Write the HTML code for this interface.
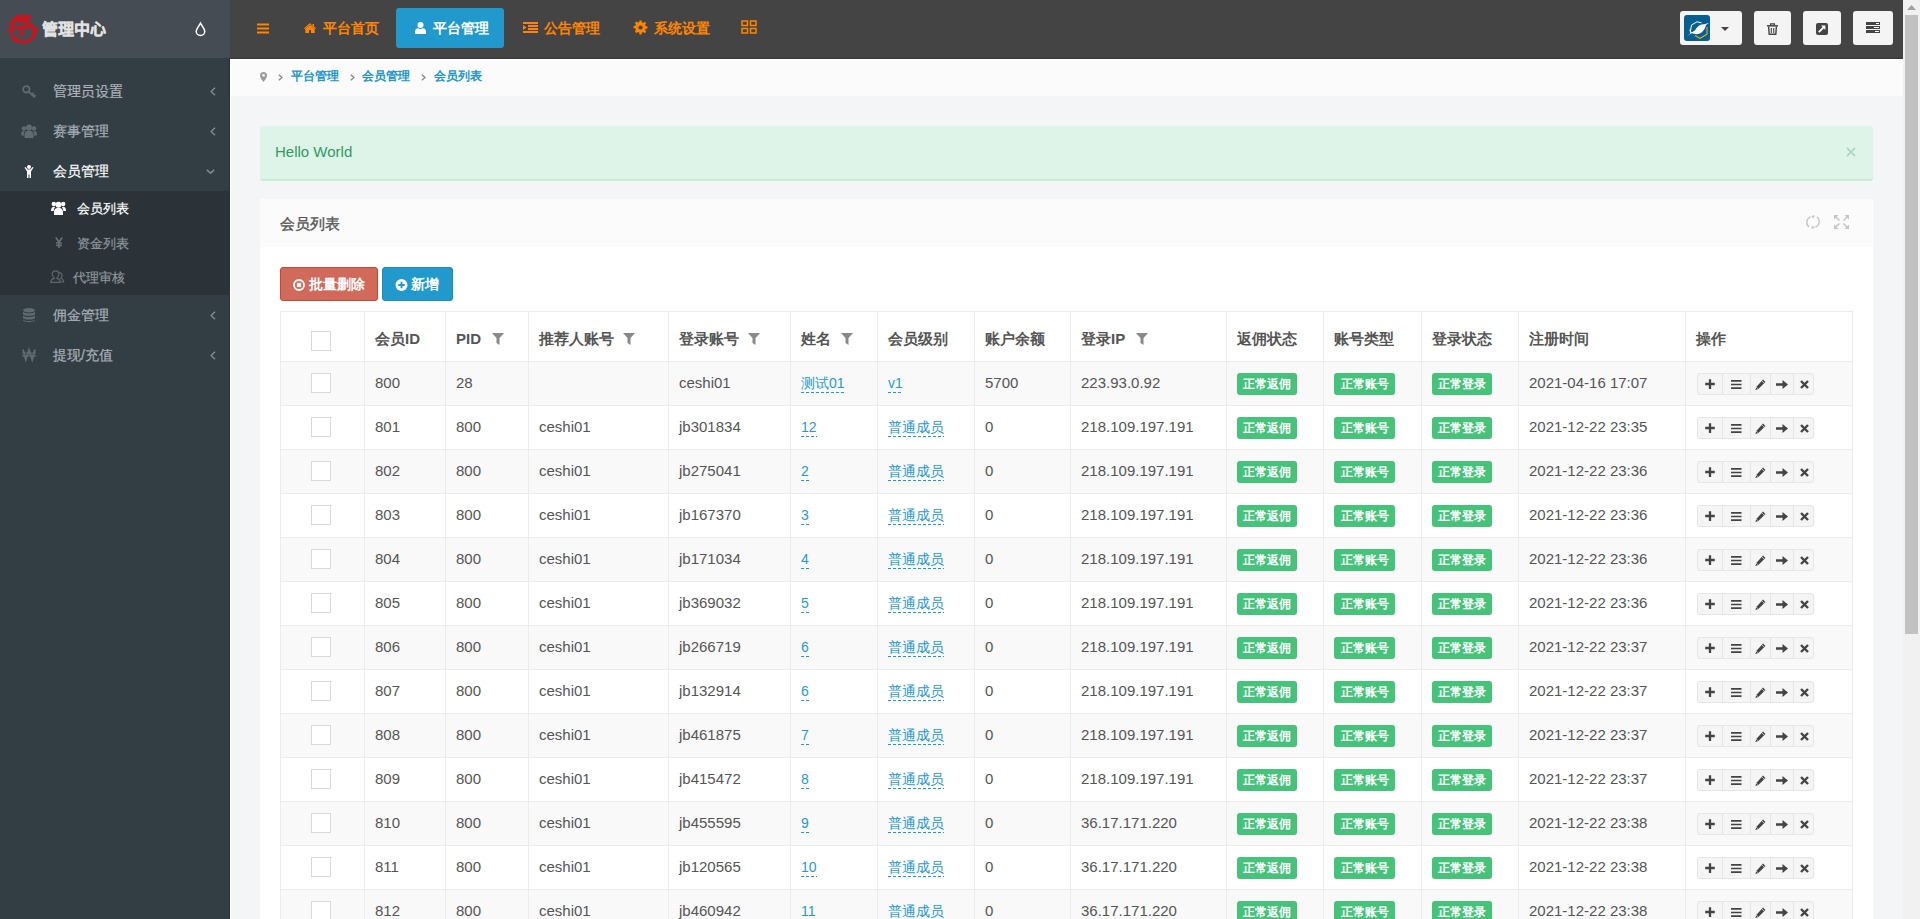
<!DOCTYPE html>
<html><head><meta charset="utf-8"><title>会员列表</title><style>
*{box-sizing:border-box;margin:0;padding:0}
html,body{width:1920px;height:919px;overflow:hidden}
body{font-family:"Liberation Sans",sans-serif;font-size:14px;color:#555;background:#f4f5f7;position:relative}
.a{position:absolute}
svg{position:absolute;display:block;overflow:visible}
#side{position:absolute;left:0;top:0;width:230px;height:919px;background:#333d44}
#logo{position:absolute;left:0;top:0;width:230px;height:58px;background:#464c54}
.mt{position:absolute;font-size:14px;color:#aab1b7;white-space:nowrap;line-height:16px;-webkit-text-stroke:0.2px currentColor}
#sub{position:absolute;left:0;top:191px;width:230px;height:104px;background:#2b3338}
#top{position:absolute;left:230px;top:0;width:1673px;height:59px;background:#444;border-bottom:1px solid #383838}
.nt{position:absolute;top:20px;font-size:14px;font-weight:bold;color:#ff8400;white-space:nowrap;line-height:16px}
#active{position:absolute;left:396px;top:8px;width:108px;height:40px;background:#2299cc;border-radius:3px}
.tb{position:absolute;top:11px;height:34px;background:#f4f4f4;border-radius:3px}
#bc{position:absolute;left:230px;top:59px;width:1673px;height:37px;background:#fbfbfb;border-top:1px solid #fff;border-left:1px solid #fff}
#wl{position:absolute;left:230px;top:59px;width:1px;height:860px;background:#fff}
#sl{position:absolute;left:229px;top:58px;width:1px;height:861px;background:#283137}
.bt{position:absolute;top:69px;font-size:12px;color:#1b95cc;white-space:nowrap;line-height:14px;font-weight:bold}
#alert{position:absolute;left:260px;top:126px;width:1613px;height:55px;background:#dff4e8;border-bottom:2px solid #c8ecd5;border-radius:3px}
#panel{position:absolute;left:260px;top:199px;width:1613px;height:720px;background:#fff}
#ph{position:absolute;left:0;top:0;width:1613px;height:48px;background:#fbfbfb}
.btn{position:absolute;top:267px;height:34px;border-radius:3px}
.btt{position:absolute;top:276px;font-size:14px;font-weight:bold;color:#fff;white-space:nowrap;line-height:16px}
table{position:absolute;left:280px;top:311px;border-collapse:collapse;table-layout:fixed;width:1573px;font-size:15px}
td,th{border:1px solid #ececec;height:44px;padding:0 0 0 10px;text-align:left;white-space:nowrap;overflow:hidden;vertical-align:middle;line-height:18px}
th{height:50px;font-weight:bold;color:#555;padding-top:5px}
tbody tr:nth-child(odd){background:#f9f9f9}
td{color:#555;padding-bottom:2px}
.cb{display:inline-block;width:20px;height:20px;border:1px solid #d9d9d9;background:#fff;margin-left:20px;vertical-align:middle}
a.l{color:#1f9bd4;text-decoration:none;font-size:14px;padding-bottom:2px;background:linear-gradient(90deg,#1f9bd4 3px,transparent 3px) repeat-x 0 100%/5px 1px}
.bd{display:inline-block;width:60px;height:22px;line-height:22px;background:#46c37b;color:#fff;font-size:12px;font-weight:bold;text-align:center;border-radius:3px;vertical-align:middle;position:relative;top:1px}
.ops{display:inline-block;position:relative;width:117px;height:22px;border:1px solid #e6e6e6;border-radius:3px;background:#f5f5f5;vertical-align:middle;margin-left:1px;top:1px}
.ops i{position:absolute;top:0;bottom:0;width:1px;background:#e6e6e6}
.fl{display:inline-block;width:12px;height:12px;margin-left:9px;vertical-align:-1px}
#sb{position:absolute;left:1903px;top:0;width:17px;height:919px;background:#f1f1f1}
#sbt{position:absolute;left:2px;top:15px;width:13px;height:619px;background:#c1c1c1}
</style></head><body>
<div id="side">
<div id="logo">
<svg style="left:5px;top:12px" width="36" height="33" viewBox="0 0 36 33" ><g fill="#c8141e" stroke="#c8141e" stroke-linejoin="round"><path d="M8.5 6L12 3.5 19 3l7 1v2.5l-4 1 3 1-1 1.5-5 .5-5-.5-4.5-1z" stroke-width=".8"/><path d="M9.5 8C6.5 10 6 15 7.5 19" fill="none" stroke-width="4"/><path d="M11 14.5c4 2 9 1.5 13.5-2.5" fill="none" stroke-width="4.2"/><path d="M23 12.5c6 1 7.5 7.5 5 12.5-2.5 4-8 5.5-12 4.5" fill="none" stroke-width="3.3"/><path d="M29 15l4 1.5-2 1.5 2 2-3.5 1z" stroke-width=".8"/><path d="M3 18l4-1 1 4-4-.5z" stroke-width=".8"/><path d="M5 23.5l5 1 5 3.5-1 2.5-5-1.5z" stroke-width="1"/><path d="M14 19.5l5 .5-1 3h-3z" stroke-width=".8"/></g><g fill="#464c54"><path d="M20.5 7.4l6-.6-1.5 1.5z"/><circle cx="17.5" cy="5.6" r=".9"/><circle cx="13" cy="6.5" r=".7"/><path d="M12 12.3l3 .8 3-.9 2 .6-1 .8-7-.2z"/></g></svg>
<div class="a" lang="zh-CN" style="left:42px;top:21px;font-size:16px;line-height:18px;font-weight:bold;color:#e2e2e2;-webkit-text-stroke:0.3px #e2e2e2;font-family:'Liberation Serif',serif">管理中心</div>
<svg style="left:195px;top:22px" width="11" height="14" viewBox="0 0 11 14" ><path d="M5.5 1.2C4 4 1.2 7 1.2 9.2a4.3 4.3 0 0 0 8.6 0C9.8 7 7 4 5.5 1.2z" fill="none" stroke="#fff" stroke-width="1.5"/></svg>
</div>
<svg style="left:22px;top:85px" width="14" height="13" viewBox="0 0 14 13" ><g fill="none" stroke="#5f6a71" stroke-width="1.8"><circle cx="4.3" cy="4.3" r="3.2"/><path d="M6.6 6.6L13 12.5M10 9.6l1.8-1.6M12 11.4l1.5-1.4"/></g></svg>
<div class="mt" style="left:53px;top:83px">管理员设置</div>
<svg style="left:210px;top:87px" width="6" height="9" viewBox="0 0 6 9" ><path d="M5 0.8L1.2 4.5 5 8.2" fill="none" stroke="#7d868c" stroke-width="1.6"/></svg>
<svg style="left:21px;top:124px" width="16" height="14" viewBox="0 0 16 14" ><g fill="#5f6a71"><circle cx="8" cy="3.5" r="3"/><circle cx="3" cy="4.5" r="2.2"/><circle cx="13" cy="4.5" r="2.2"/><path d="M3.5 14v-3c0-3 2-4.5 4.5-4.5s4.5 1.5 4.5 4.5v3z"/><path d="M0 11c0-2.5 1-4 3-4l1 .5c-1 1-1.2 2-1.2 3.5v1z"/><path d="M16 11c0-2.5-1-4-3-4l-1 .5c1 1 1.2 2 1.2 3.5v1z"/></g></svg>
<div class="mt" style="left:53px;top:123px">赛事管理</div>
<svg style="left:210px;top:127px" width="6" height="9" viewBox="0 0 6 9" ><path d="M5 0.8L1.2 4.5 5 8.2" fill="none" stroke="#7d868c" stroke-width="1.6"/></svg>
<svg style="left:24px;top:165px" width="10" height="13" viewBox="0 0 10 13" ><g fill="#fff"><circle cx="5" cy="2" r="2"/><path d="M0.5 2.5l1 -0.5 2 2.5h3l2-2.5 1 .5-2.5 4v6.5h-1.5v-3.5h-1v3.5h-1.5v-6.5z"/></g></svg>
<div class="mt" style="left:53px;top:163px;color:#fff">会员管理</div>
<svg style="left:206px;top:169px" width="9" height="5" viewBox="0 0 9 5" ><path d="M0.8 0.8L4.5 4.2 8.2 0.8" fill="none" stroke="#7d868c" stroke-width="1.6"/></svg>
<div id="sub">
<svg style="left:51px;top:10px" width="15" height="14" viewBox="0 0 15 14" ><g fill="#fff"><circle cx="7.5" cy="3.8" r="3"/><circle cx="2.8" cy="3" r="2.2"/><circle cx="12.2" cy="3" r="2.2"/><path d="M3 14v-3.5c0-2.5 2-3.8 4.5-3.8s4.5 1.3 4.5 3.8v3.5z"/><path d="M0 10c0-3 1-4.3 3-4.3l1.2.6c-1 .8-1.5 2-1.5 3.7z"/><path d="M15 10c0-3-1-4.3-3-4.3l-1.2.6c1 .8 1.5 2 1.5 3.7z"/></g></svg>
<div class="mt" style="left:77px;top:10px;font-size:13px;color:#fff">会员列表</div>
<svg style="left:55px;top:46px" width="8" height="11" viewBox="0 0 8 11" ><g fill="none" stroke="#666e73" stroke-width="1.7"><path d="M0.8 0.5L4 5 7.2 0.5M4 5v6M1 6h6M1 8.3h6"/></g></svg>
<div class="mt" style="left:77px;top:45px;font-size:13px;color:#8f979c">资金列表</div>
<svg style="left:50px;top:79px" width="14" height="13" viewBox="0 0 14 13" ><g fill="none" stroke="#5f676c" stroke-width="1.2"><path d="M5 8.2C3 8.5 0.8 9.5 0.8 12.3h9.5c0-2.8-2.2-3.8-4.2-4.1"/><path d="M4 7.5c-1.3-1-1.8-2.5-1.8-4A3.5 3.5 0 0 1 9 3.5c0 1.5-.5 3-1.8 4"/><path d="M9 2.5a3 3 0 0 1 3 3c0 1-.3 2-1.2 3 1.8.3 2.8 1.3 2.8 3.3h-2.3"/></g></svg>
<div class="mt" style="left:73px;top:79px;font-size:13px;color:#8f979c">代理审核</div>
</div>
<svg style="left:23px;top:308px" width="12" height="14" viewBox="0 0 12 14" ><g fill="#5f6a71"><ellipse cx="6" cy="2.2" rx="6" ry="2.2"/><path d="M0 3.8c1 1 3 1.5 6 1.5s5-.5 6-1.5v2.4c-1 1-3 1.5-6 1.5s-5-.5-6-1.5z"/><path d="M0 7.6c1 1 3 1.5 6 1.5s5-.5 6-1.5v2.4c-1 1-3 1.5-6 1.5s-5-.5-6-1.5z"/><path d="M0 11.4c1 1 3 1.5 6 1.5s5-.5 6-1.5v.6c0 1.2-2.7 2-6 2s-6-.8-6-2z"/></g></svg>
<div class="mt" style="left:53px;top:307px">佣金管理</div>
<svg style="left:210px;top:311px" width="6" height="9" viewBox="0 0 6 9" ><path d="M5 0.8L1.2 4.5 5 8.2" fill="none" stroke="#7d868c" stroke-width="1.6"/></svg>
<svg style="left:22px;top:349px" width="14" height="11" viewBox="0 0 14 11" ><g fill="none" stroke="#5f6a71"><path d="M1 0.5l2.8 10 3.2-9.5 3.2 9.5 2.8-10" stroke-width="1.9"/><path d="M0 4h14M0 6.8h14" stroke-width="1.2"/></g></svg>
<div class="mt" style="left:53px;top:347px">提现/充值</div>
<svg style="left:210px;top:351px" width="6" height="9" viewBox="0 0 6 9" ><path d="M5 0.8L1.2 4.5 5 8.2" fill="none" stroke="#7d868c" stroke-width="1.6"/></svg>
</div>
<div id="top"></div>
<svg style="left:257px;top:23px" width="12" height="11" viewBox="0 0 12 11" ><g fill="#ff8400"><rect y="0.5" width="12" height="2"/><rect y="4.5" width="12" height="2"/><rect y="8.5" width="12" height="2"/></g></svg>
<svg style="left:304px;top:23px" width="12" height="10" viewBox="0 0 12 10" ><g fill="#ff8400"><path d="M6 0L0 5.3l.8.8L6 1.6l5.2 4.5.8-.8-2-1.8V1h-1.5v2z"/><path d="M1.3 5.8L6 2l4.7 3.8V10H7V7H5v3H1.3z"/></g></svg>
<div class="nt" style="left:323px">平台首页</div>
<div id="active"></div>
<svg style="left:415px;top:22px" width="11" height="12" viewBox="0 0 11 12" ><g fill="#fff"><circle cx="5.5" cy="3" r="3"/><path d="M0 12v-2.2c0-2.5 1.5-3.6 3-3.6 1 .6 1.6.8 2.5.8s1.5-.2 2.5-.8c1.5 0 3 1.1 3 3.6V12z"/></g></svg>
<div class="nt" style="left:433px;color:#fff">平台管理</div>
<svg style="left:523px;top:22px" width="15" height="11" viewBox="0 0 15 11" ><g fill="#ff8400"><rect x="0" y="0" width="15" height="2"/><rect x="5" y="3" width="10" height="2"/><rect x="5" y="6" width="10" height="2"/><rect x="0" y="9" width="15" height="2"/><path d="M0 3l3.5 2.5L0 8z"/></g></svg>
<div class="nt" style="left:544px">公告管理</div>
<svg style="left:634px;top:21px" width="13" height="13" viewBox="0 0 13 13" ><g fill="#ff8400"><path d="M5.4 0h2.2l.4 2 1.3.6 1.7-1.2 1.6 1.6-1.2 1.7.6 1.3 2 .4v2.2l-2 .4-.6 1.3 1.2 1.7-1.6 1.6-1.7-1.2-1.3.6-.4 2H5.4l-.4-2-1.3-.6-1.7 1.2L.4 11.6l1.2-1.7L1 8.6l-2-.4V6l2-.4.6-1.3L.4 2.6 2 1l1.7 1.2L5 1.6z" transform="translate(0.5 -0.5) scale(.93)"/></g><circle cx="6.5" cy="6.5" r="2.1" fill="#444"/></svg>
<div class="nt" style="left:654px">系统设置</div>
<svg style="left:741px;top:20px" width="16" height="14" viewBox="0 0 16 14" ><g fill="none" stroke="#ff8400" stroke-width="1.5"><rect x="1" y="1" width="5.5" height="4.5"/><rect x="9.5" y="1" width="5.5" height="4.5"/><rect x="1" y="8.5" width="5.5" height="4.5"/><rect x="9.5" y="8.5" width="5.5" height="4.5"/></g></svg>
<div class="tb" style="left:1680px;width:62px"></div>
<div class="a" style="left:1684px;top:15px;width:26px;height:26px;background:#05608f;border-radius:3px"></div>
<svg style="left:1684px;top:15px" width="26" height="26" viewBox="0 0 26 26" ><path d="M6.5 15.5L7.5 10 13 6.8l4.5 1" fill="none" stroke="#fff" stroke-width="1"/><path d="M11 20.5l5 2.8 7-4V12" fill="none" stroke="#e5a823" stroke-width="1.1"/><path d="M3 21.5l4.5-3.5c3 1.5 7 1.8 10-.5 2.5-2 4-5 4.5-7.5L25 7.8l-4.5 1.5c-3-.5-6 1-8 4-1.5 2.2-3 3.5-5 4z" fill="#fff"/><path d="M5.8 14.5l1.5 4" stroke="#fff" stroke-width="1.2"/><path d="M12 14.5l2.5-1.5" stroke="#fff" stroke-width="1.2"/></svg>
<svg style="left:1721px;top:27px" width="8" height="4" viewBox="0 0 8 4" ><path d="M0 0h8L4 4z" fill="#444"/></svg>
<div class="tb" style="left:1754px;width:37px"></div>
<svg style="left:1767px;top:23px" width="11" height="12" viewBox="0 0 11 12" ><g fill="none" stroke="#444"><path d="M3.6 2.3V.8h3.8v1.5" stroke-width="1.3"/><path d="M0 2.8h11" stroke-width="1.5"/><path d="M1.6 3.5l.6 7.8h6.6l.6-7.8" stroke-width="1.4"/><path d="M4.3 5v5M6.7 5v5" stroke-width="1.1"/></g></svg>
<div class="tb" style="left:1803px;width:38px"></div>
<svg style="left:1816px;top:23px" width="12" height="12" viewBox="0 0 12 12" ><rect x="0" y="0" width="12" height="12" rx="2" fill="#444"/><path d="M2.8 9.2l4.8-4.8" stroke="#fff" stroke-width="1.9"/><path d="M5 2.6h4.4V7z" fill="#fff"/></svg>
<div class="tb" style="left:1853px;width:40px"></div>
<svg style="left:1866px;top:22px" width="14" height="11" viewBox="0 0 14 11" ><g fill="#444"><rect y="0" width="14" height="3"/><rect y="4" width="14" height="3"/><rect y="8" width="14" height="3"/></g><g fill="#fff"><rect x="10" y="1" width="3" height="1"/><rect x="8" y="5" width="5" height="1"/><rect x="9" y="9" width="4" height="1"/></g></svg>
<div id="bc"></div><div id="wl"></div><div id="sl"></div>
<svg style="left:260px;top:72px" width="7" height="10" viewBox="0 0 7 10" ><path d="M3.5 0A3.5 3.5 0 0 0 0 3.5C0 6 3.5 10 3.5 10S7 6 7 3.5A3.5 3.5 0 0 0 3.5 0zm0 2a1.4 1.4 0 1 1 0 2.8 1.4 1.4 0 0 1 0-2.8z" fill="#999"/></svg>
<svg style="left:278px;top:74px" width="5" height="7" viewBox="0 0 5 7" ><path d="M.8.8L4 3.5.8 6.2" fill="none" stroke="#888" stroke-width="1.3"/></svg>
<div class="bt" style="left:291px">平台管理</div>
<svg style="left:350px;top:74px" width="5" height="7" viewBox="0 0 5 7" ><path d="M.8.8L4 3.5.8 6.2" fill="none" stroke="#888" stroke-width="1.3"/></svg>
<div class="bt" style="left:362px">会员管理</div>
<svg style="left:421px;top:74px" width="5" height="7" viewBox="0 0 5 7" ><path d="M.8.8L4 3.5.8 6.2" fill="none" stroke="#888" stroke-width="1.3"/></svg>
<div class="bt" style="left:434px">会员列表</div>
<div id="alert"></div>
<div class="a" style="left:275px;top:143px;font-size:15px;line-height:17px;color:#2f9a68">Hello World</div>
<svg style="left:1846px;top:147px" width="10" height="10" viewBox="0 0 10 10" ><path d="M1 1l8 8M9 1L1 9" stroke="#a9dcbf" stroke-width="1.8"/></svg>
<div id="panel"><div id="ph"></div></div>
<div class="a" style="left:280px;top:215px;font-size:15px;line-height:17px;color:#555;-webkit-text-stroke:0.35px #555">会员列表</div>
<svg style="left:1806px;top:215px" width="14" height="14" viewBox="0 0 14 14" ><g fill="none" stroke="#c4c4c4" stroke-width="1.3"><path d="M4.5 1.8A6 6 0 0 0 3 12"/><path d="M9.5 12.2A6 6 0 0 0 11 2"/></g><g fill="#c4c4c4"><path d="M8.5 0l-3.5 1.2 3 2.2z"/><path d="M5.5 14l3.5-1.2-3-2.2z"/></g></svg>
<svg style="left:1834px;top:215px" width="15" height="14" viewBox="0 0 15 14" ><g fill="none" stroke="#c4c4c4" stroke-width="1.4"><path d="M1 1l4.5 4.5M14 1L9.5 5.5M1 13l4.5-4.5M14 13L9.5 8.5"/></g><g fill="#c4c4c4"><path d="M0 0h4.5L0 4.5z"/><path d="M15 0h-4.5L15 4.5z"/><path d="M0 14h4.5L0 9.5z"/><path d="M15 14h-4.5L15 9.5z"/></g></svg>
<div class="btn" style="left:280px;width:98px;background:#d26a5c;border:1px solid #c54736"></div>
<svg style="left:293px;top:279px" width="12" height="12" viewBox="0 0 12 12" ><circle cx="6" cy="6" r="5" fill="none" stroke="#fff" stroke-width="1.8"/><path d="M4.2 4.2l3.6 3.6M7.8 4.2L4.2 7.8" stroke="#fff" stroke-width="2"/></svg>
<div class="btt" style="left:309px">批量删除</div>
<div class="btn" style="left:382px;width:71px;background:#2299cc;border:1px solid #1d8bbb"></div>
<svg style="left:395px;top:279px" width="13" height="12" viewBox="0 0 13 12" ><circle cx="6.5" cy="6" r="6" fill="#fff"/><path d="M6.5 2.8v6.4M3.3 6h6.4" stroke="#2299cc" stroke-width="1.9"/></svg>
<div class="btt" style="left:411px">新增</div>
<table><colgroup><col style="width:84px"><col style="width:81px"><col style="width:83px"><col style="width:140px"><col style="width:122px"><col style="width:87px"><col style="width:97px"><col style="width:96px"><col style="width:156px"><col style="width:97px"><col style="width:98px"><col style="width:97px"><col style="width:167px"><col style="width:167px"></colgroup>
<thead><tr><th><span class="cb" style="position:relative;top:2px"></span></th><th>会员ID</th><th>PID<svg class="fl" style="position:static;display:inline-block;margin-left:11px" width="12" height="12" viewBox="0 0 12 12"><path d="M0 0h12L7.5 5v7L4.5 10V5z" fill="#888"/></svg></th><th>推荐人账号<svg class="fl" style="position:static;display:inline-block" width="12" height="12" viewBox="0 0 12 12"><path d="M0 0h12L7.5 5v7L4.5 10V5z" fill="#888"/></svg></th><th>登录账号<svg class="fl" style="position:static;display:inline-block" width="12" height="12" viewBox="0 0 12 12"><path d="M0 0h12L7.5 5v7L4.5 10V5z" fill="#888"/></svg></th><th>姓名<svg class="fl" style="position:static;display:inline-block;margin-left:10px" width="12" height="12" viewBox="0 0 12 12"><path d="M0 0h12L7.5 5v7L4.5 10V5z" fill="#888"/></svg></th><th>会员级别</th><th>账户余额</th><th>登录IP<svg class="fl" style="position:static;display:inline-block;margin-left:11px" width="12" height="12" viewBox="0 0 12 12"><path d="M0 0h12L7.5 5v7L4.5 10V5z" fill="#888"/></svg></th><th>返佣状态</th><th>账号类型</th><th>登录状态</th><th>注册时间</th><th>操作</th></tr></thead><tbody>
<tr><td><span class="cb"></span></td><td>800</td><td>28</td><td></td><td>ceshi01</td><td><a class="l">测试01</a></td><td><a class="l">v1</a></td><td>5700</td><td>223.93.0.92</td><td><span class="bd">正常返佣</span></td><td><span class="bd" style="width:61px">正常账号</span></td><td><span class="bd">正常登录</span></td><td>2021-04-16 17:07</td><td><span class="ops"><i style="left:24px"></i><i style="left:52px"></i><i style="left:72px"></i><i style="left:95px"></i><svg style="left:7px;top:5px" width="10" height="10" viewBox="0 0 10 10"><path d="M5 0.3v9.6M0.2 5h9.6" stroke="#444" stroke-width="2.3"/></svg><svg style="left:33px;top:6px" width="11" height="9" viewBox="0 0 11 9"><path d="M0 0.9h10.5M0 4.5h10.5M0 8.1h10.5" stroke="#444" stroke-width="1.6"/></svg><svg style="left:57px;top:5px" width="11" height="11" viewBox="0 0 11 11"><path d="M8 0.6l2.4 2.4-7 7-3 .9.9-3z" fill="#444"/><path d="M1.4 8.2l1.4 1.4" stroke="#f5f5f5" stroke-width="0.9"/><path d="M6.8 1.8l2.4 2.4" stroke="#f5f5f5" stroke-width="0.7"/></svg><svg style="left:78px;top:6px" width="12" height="10" viewBox="0 0 12 10"><path d="M0 3.3h6.5V0L12 4.5 6.5 9V5.7H0z" fill="#444"/></svg><svg style="left:102px;top:6px" width="9" height="9" viewBox="0 0 9 9"><path d="M1 1l7 7M8 1L1 8" stroke="#444" stroke-width="2.4"/></svg></span></td></tr>
<tr><td><span class="cb"></span></td><td>801</td><td>800</td><td>ceshi01</td><td>jb301834</td><td><a class="l">12</a></td><td><a class="l">普通成员</a></td><td>0</td><td>218.109.197.191</td><td><span class="bd">正常返佣</span></td><td><span class="bd" style="width:61px">正常账号</span></td><td><span class="bd">正常登录</span></td><td>2021-12-22 23:35</td><td><span class="ops"><i style="left:24px"></i><i style="left:52px"></i><i style="left:72px"></i><i style="left:95px"></i><svg style="left:7px;top:5px" width="10" height="10" viewBox="0 0 10 10"><path d="M5 0.3v9.6M0.2 5h9.6" stroke="#444" stroke-width="2.3"/></svg><svg style="left:33px;top:6px" width="11" height="9" viewBox="0 0 11 9"><path d="M0 0.9h10.5M0 4.5h10.5M0 8.1h10.5" stroke="#444" stroke-width="1.6"/></svg><svg style="left:57px;top:5px" width="11" height="11" viewBox="0 0 11 11"><path d="M8 0.6l2.4 2.4-7 7-3 .9.9-3z" fill="#444"/><path d="M1.4 8.2l1.4 1.4" stroke="#f5f5f5" stroke-width="0.9"/><path d="M6.8 1.8l2.4 2.4" stroke="#f5f5f5" stroke-width="0.7"/></svg><svg style="left:78px;top:6px" width="12" height="10" viewBox="0 0 12 10"><path d="M0 3.3h6.5V0L12 4.5 6.5 9V5.7H0z" fill="#444"/></svg><svg style="left:102px;top:6px" width="9" height="9" viewBox="0 0 9 9"><path d="M1 1l7 7M8 1L1 8" stroke="#444" stroke-width="2.4"/></svg></span></td></tr>
<tr><td><span class="cb"></span></td><td>802</td><td>800</td><td>ceshi01</td><td>jb275041</td><td><a class="l">2</a></td><td><a class="l">普通成员</a></td><td>0</td><td>218.109.197.191</td><td><span class="bd">正常返佣</span></td><td><span class="bd" style="width:61px">正常账号</span></td><td><span class="bd">正常登录</span></td><td>2021-12-22 23:36</td><td><span class="ops"><i style="left:24px"></i><i style="left:52px"></i><i style="left:72px"></i><i style="left:95px"></i><svg style="left:7px;top:5px" width="10" height="10" viewBox="0 0 10 10"><path d="M5 0.3v9.6M0.2 5h9.6" stroke="#444" stroke-width="2.3"/></svg><svg style="left:33px;top:6px" width="11" height="9" viewBox="0 0 11 9"><path d="M0 0.9h10.5M0 4.5h10.5M0 8.1h10.5" stroke="#444" stroke-width="1.6"/></svg><svg style="left:57px;top:5px" width="11" height="11" viewBox="0 0 11 11"><path d="M8 0.6l2.4 2.4-7 7-3 .9.9-3z" fill="#444"/><path d="M1.4 8.2l1.4 1.4" stroke="#f5f5f5" stroke-width="0.9"/><path d="M6.8 1.8l2.4 2.4" stroke="#f5f5f5" stroke-width="0.7"/></svg><svg style="left:78px;top:6px" width="12" height="10" viewBox="0 0 12 10"><path d="M0 3.3h6.5V0L12 4.5 6.5 9V5.7H0z" fill="#444"/></svg><svg style="left:102px;top:6px" width="9" height="9" viewBox="0 0 9 9"><path d="M1 1l7 7M8 1L1 8" stroke="#444" stroke-width="2.4"/></svg></span></td></tr>
<tr><td><span class="cb"></span></td><td>803</td><td>800</td><td>ceshi01</td><td>jb167370</td><td><a class="l">3</a></td><td><a class="l">普通成员</a></td><td>0</td><td>218.109.197.191</td><td><span class="bd">正常返佣</span></td><td><span class="bd" style="width:61px">正常账号</span></td><td><span class="bd">正常登录</span></td><td>2021-12-22 23:36</td><td><span class="ops"><i style="left:24px"></i><i style="left:52px"></i><i style="left:72px"></i><i style="left:95px"></i><svg style="left:7px;top:5px" width="10" height="10" viewBox="0 0 10 10"><path d="M5 0.3v9.6M0.2 5h9.6" stroke="#444" stroke-width="2.3"/></svg><svg style="left:33px;top:6px" width="11" height="9" viewBox="0 0 11 9"><path d="M0 0.9h10.5M0 4.5h10.5M0 8.1h10.5" stroke="#444" stroke-width="1.6"/></svg><svg style="left:57px;top:5px" width="11" height="11" viewBox="0 0 11 11"><path d="M8 0.6l2.4 2.4-7 7-3 .9.9-3z" fill="#444"/><path d="M1.4 8.2l1.4 1.4" stroke="#f5f5f5" stroke-width="0.9"/><path d="M6.8 1.8l2.4 2.4" stroke="#f5f5f5" stroke-width="0.7"/></svg><svg style="left:78px;top:6px" width="12" height="10" viewBox="0 0 12 10"><path d="M0 3.3h6.5V0L12 4.5 6.5 9V5.7H0z" fill="#444"/></svg><svg style="left:102px;top:6px" width="9" height="9" viewBox="0 0 9 9"><path d="M1 1l7 7M8 1L1 8" stroke="#444" stroke-width="2.4"/></svg></span></td></tr>
<tr><td><span class="cb"></span></td><td>804</td><td>800</td><td>ceshi01</td><td>jb171034</td><td><a class="l">4</a></td><td><a class="l">普通成员</a></td><td>0</td><td>218.109.197.191</td><td><span class="bd">正常返佣</span></td><td><span class="bd" style="width:61px">正常账号</span></td><td><span class="bd">正常登录</span></td><td>2021-12-22 23:36</td><td><span class="ops"><i style="left:24px"></i><i style="left:52px"></i><i style="left:72px"></i><i style="left:95px"></i><svg style="left:7px;top:5px" width="10" height="10" viewBox="0 0 10 10"><path d="M5 0.3v9.6M0.2 5h9.6" stroke="#444" stroke-width="2.3"/></svg><svg style="left:33px;top:6px" width="11" height="9" viewBox="0 0 11 9"><path d="M0 0.9h10.5M0 4.5h10.5M0 8.1h10.5" stroke="#444" stroke-width="1.6"/></svg><svg style="left:57px;top:5px" width="11" height="11" viewBox="0 0 11 11"><path d="M8 0.6l2.4 2.4-7 7-3 .9.9-3z" fill="#444"/><path d="M1.4 8.2l1.4 1.4" stroke="#f5f5f5" stroke-width="0.9"/><path d="M6.8 1.8l2.4 2.4" stroke="#f5f5f5" stroke-width="0.7"/></svg><svg style="left:78px;top:6px" width="12" height="10" viewBox="0 0 12 10"><path d="M0 3.3h6.5V0L12 4.5 6.5 9V5.7H0z" fill="#444"/></svg><svg style="left:102px;top:6px" width="9" height="9" viewBox="0 0 9 9"><path d="M1 1l7 7M8 1L1 8" stroke="#444" stroke-width="2.4"/></svg></span></td></tr>
<tr><td><span class="cb"></span></td><td>805</td><td>800</td><td>ceshi01</td><td>jb369032</td><td><a class="l">5</a></td><td><a class="l">普通成员</a></td><td>0</td><td>218.109.197.191</td><td><span class="bd">正常返佣</span></td><td><span class="bd" style="width:61px">正常账号</span></td><td><span class="bd">正常登录</span></td><td>2021-12-22 23:36</td><td><span class="ops"><i style="left:24px"></i><i style="left:52px"></i><i style="left:72px"></i><i style="left:95px"></i><svg style="left:7px;top:5px" width="10" height="10" viewBox="0 0 10 10"><path d="M5 0.3v9.6M0.2 5h9.6" stroke="#444" stroke-width="2.3"/></svg><svg style="left:33px;top:6px" width="11" height="9" viewBox="0 0 11 9"><path d="M0 0.9h10.5M0 4.5h10.5M0 8.1h10.5" stroke="#444" stroke-width="1.6"/></svg><svg style="left:57px;top:5px" width="11" height="11" viewBox="0 0 11 11"><path d="M8 0.6l2.4 2.4-7 7-3 .9.9-3z" fill="#444"/><path d="M1.4 8.2l1.4 1.4" stroke="#f5f5f5" stroke-width="0.9"/><path d="M6.8 1.8l2.4 2.4" stroke="#f5f5f5" stroke-width="0.7"/></svg><svg style="left:78px;top:6px" width="12" height="10" viewBox="0 0 12 10"><path d="M0 3.3h6.5V0L12 4.5 6.5 9V5.7H0z" fill="#444"/></svg><svg style="left:102px;top:6px" width="9" height="9" viewBox="0 0 9 9"><path d="M1 1l7 7M8 1L1 8" stroke="#444" stroke-width="2.4"/></svg></span></td></tr>
<tr><td><span class="cb"></span></td><td>806</td><td>800</td><td>ceshi01</td><td>jb266719</td><td><a class="l">6</a></td><td><a class="l">普通成员</a></td><td>0</td><td>218.109.197.191</td><td><span class="bd">正常返佣</span></td><td><span class="bd" style="width:61px">正常账号</span></td><td><span class="bd">正常登录</span></td><td>2021-12-22 23:37</td><td><span class="ops"><i style="left:24px"></i><i style="left:52px"></i><i style="left:72px"></i><i style="left:95px"></i><svg style="left:7px;top:5px" width="10" height="10" viewBox="0 0 10 10"><path d="M5 0.3v9.6M0.2 5h9.6" stroke="#444" stroke-width="2.3"/></svg><svg style="left:33px;top:6px" width="11" height="9" viewBox="0 0 11 9"><path d="M0 0.9h10.5M0 4.5h10.5M0 8.1h10.5" stroke="#444" stroke-width="1.6"/></svg><svg style="left:57px;top:5px" width="11" height="11" viewBox="0 0 11 11"><path d="M8 0.6l2.4 2.4-7 7-3 .9.9-3z" fill="#444"/><path d="M1.4 8.2l1.4 1.4" stroke="#f5f5f5" stroke-width="0.9"/><path d="M6.8 1.8l2.4 2.4" stroke="#f5f5f5" stroke-width="0.7"/></svg><svg style="left:78px;top:6px" width="12" height="10" viewBox="0 0 12 10"><path d="M0 3.3h6.5V0L12 4.5 6.5 9V5.7H0z" fill="#444"/></svg><svg style="left:102px;top:6px" width="9" height="9" viewBox="0 0 9 9"><path d="M1 1l7 7M8 1L1 8" stroke="#444" stroke-width="2.4"/></svg></span></td></tr>
<tr><td><span class="cb"></span></td><td>807</td><td>800</td><td>ceshi01</td><td>jb132914</td><td><a class="l">6</a></td><td><a class="l">普通成员</a></td><td>0</td><td>218.109.197.191</td><td><span class="bd">正常返佣</span></td><td><span class="bd" style="width:61px">正常账号</span></td><td><span class="bd">正常登录</span></td><td>2021-12-22 23:37</td><td><span class="ops"><i style="left:24px"></i><i style="left:52px"></i><i style="left:72px"></i><i style="left:95px"></i><svg style="left:7px;top:5px" width="10" height="10" viewBox="0 0 10 10"><path d="M5 0.3v9.6M0.2 5h9.6" stroke="#444" stroke-width="2.3"/></svg><svg style="left:33px;top:6px" width="11" height="9" viewBox="0 0 11 9"><path d="M0 0.9h10.5M0 4.5h10.5M0 8.1h10.5" stroke="#444" stroke-width="1.6"/></svg><svg style="left:57px;top:5px" width="11" height="11" viewBox="0 0 11 11"><path d="M8 0.6l2.4 2.4-7 7-3 .9.9-3z" fill="#444"/><path d="M1.4 8.2l1.4 1.4" stroke="#f5f5f5" stroke-width="0.9"/><path d="M6.8 1.8l2.4 2.4" stroke="#f5f5f5" stroke-width="0.7"/></svg><svg style="left:78px;top:6px" width="12" height="10" viewBox="0 0 12 10"><path d="M0 3.3h6.5V0L12 4.5 6.5 9V5.7H0z" fill="#444"/></svg><svg style="left:102px;top:6px" width="9" height="9" viewBox="0 0 9 9"><path d="M1 1l7 7M8 1L1 8" stroke="#444" stroke-width="2.4"/></svg></span></td></tr>
<tr><td><span class="cb"></span></td><td>808</td><td>800</td><td>ceshi01</td><td>jb461875</td><td><a class="l">7</a></td><td><a class="l">普通成员</a></td><td>0</td><td>218.109.197.191</td><td><span class="bd">正常返佣</span></td><td><span class="bd" style="width:61px">正常账号</span></td><td><span class="bd">正常登录</span></td><td>2021-12-22 23:37</td><td><span class="ops"><i style="left:24px"></i><i style="left:52px"></i><i style="left:72px"></i><i style="left:95px"></i><svg style="left:7px;top:5px" width="10" height="10" viewBox="0 0 10 10"><path d="M5 0.3v9.6M0.2 5h9.6" stroke="#444" stroke-width="2.3"/></svg><svg style="left:33px;top:6px" width="11" height="9" viewBox="0 0 11 9"><path d="M0 0.9h10.5M0 4.5h10.5M0 8.1h10.5" stroke="#444" stroke-width="1.6"/></svg><svg style="left:57px;top:5px" width="11" height="11" viewBox="0 0 11 11"><path d="M8 0.6l2.4 2.4-7 7-3 .9.9-3z" fill="#444"/><path d="M1.4 8.2l1.4 1.4" stroke="#f5f5f5" stroke-width="0.9"/><path d="M6.8 1.8l2.4 2.4" stroke="#f5f5f5" stroke-width="0.7"/></svg><svg style="left:78px;top:6px" width="12" height="10" viewBox="0 0 12 10"><path d="M0 3.3h6.5V0L12 4.5 6.5 9V5.7H0z" fill="#444"/></svg><svg style="left:102px;top:6px" width="9" height="9" viewBox="0 0 9 9"><path d="M1 1l7 7M8 1L1 8" stroke="#444" stroke-width="2.4"/></svg></span></td></tr>
<tr><td><span class="cb"></span></td><td>809</td><td>800</td><td>ceshi01</td><td>jb415472</td><td><a class="l">8</a></td><td><a class="l">普通成员</a></td><td>0</td><td>218.109.197.191</td><td><span class="bd">正常返佣</span></td><td><span class="bd" style="width:61px">正常账号</span></td><td><span class="bd">正常登录</span></td><td>2021-12-22 23:37</td><td><span class="ops"><i style="left:24px"></i><i style="left:52px"></i><i style="left:72px"></i><i style="left:95px"></i><svg style="left:7px;top:5px" width="10" height="10" viewBox="0 0 10 10"><path d="M5 0.3v9.6M0.2 5h9.6" stroke="#444" stroke-width="2.3"/></svg><svg style="left:33px;top:6px" width="11" height="9" viewBox="0 0 11 9"><path d="M0 0.9h10.5M0 4.5h10.5M0 8.1h10.5" stroke="#444" stroke-width="1.6"/></svg><svg style="left:57px;top:5px" width="11" height="11" viewBox="0 0 11 11"><path d="M8 0.6l2.4 2.4-7 7-3 .9.9-3z" fill="#444"/><path d="M1.4 8.2l1.4 1.4" stroke="#f5f5f5" stroke-width="0.9"/><path d="M6.8 1.8l2.4 2.4" stroke="#f5f5f5" stroke-width="0.7"/></svg><svg style="left:78px;top:6px" width="12" height="10" viewBox="0 0 12 10"><path d="M0 3.3h6.5V0L12 4.5 6.5 9V5.7H0z" fill="#444"/></svg><svg style="left:102px;top:6px" width="9" height="9" viewBox="0 0 9 9"><path d="M1 1l7 7M8 1L1 8" stroke="#444" stroke-width="2.4"/></svg></span></td></tr>
<tr><td><span class="cb"></span></td><td>810</td><td>800</td><td>ceshi01</td><td>jb455595</td><td><a class="l">9</a></td><td><a class="l">普通成员</a></td><td>0</td><td>36.17.171.220</td><td><span class="bd">正常返佣</span></td><td><span class="bd" style="width:61px">正常账号</span></td><td><span class="bd">正常登录</span></td><td>2021-12-22 23:38</td><td><span class="ops"><i style="left:24px"></i><i style="left:52px"></i><i style="left:72px"></i><i style="left:95px"></i><svg style="left:7px;top:5px" width="10" height="10" viewBox="0 0 10 10"><path d="M5 0.3v9.6M0.2 5h9.6" stroke="#444" stroke-width="2.3"/></svg><svg style="left:33px;top:6px" width="11" height="9" viewBox="0 0 11 9"><path d="M0 0.9h10.5M0 4.5h10.5M0 8.1h10.5" stroke="#444" stroke-width="1.6"/></svg><svg style="left:57px;top:5px" width="11" height="11" viewBox="0 0 11 11"><path d="M8 0.6l2.4 2.4-7 7-3 .9.9-3z" fill="#444"/><path d="M1.4 8.2l1.4 1.4" stroke="#f5f5f5" stroke-width="0.9"/><path d="M6.8 1.8l2.4 2.4" stroke="#f5f5f5" stroke-width="0.7"/></svg><svg style="left:78px;top:6px" width="12" height="10" viewBox="0 0 12 10"><path d="M0 3.3h6.5V0L12 4.5 6.5 9V5.7H0z" fill="#444"/></svg><svg style="left:102px;top:6px" width="9" height="9" viewBox="0 0 9 9"><path d="M1 1l7 7M8 1L1 8" stroke="#444" stroke-width="2.4"/></svg></span></td></tr>
<tr><td><span class="cb"></span></td><td>811</td><td>800</td><td>ceshi01</td><td>jb120565</td><td><a class="l">10</a></td><td><a class="l">普通成员</a></td><td>0</td><td>36.17.171.220</td><td><span class="bd">正常返佣</span></td><td><span class="bd" style="width:61px">正常账号</span></td><td><span class="bd">正常登录</span></td><td>2021-12-22 23:38</td><td><span class="ops"><i style="left:24px"></i><i style="left:52px"></i><i style="left:72px"></i><i style="left:95px"></i><svg style="left:7px;top:5px" width="10" height="10" viewBox="0 0 10 10"><path d="M5 0.3v9.6M0.2 5h9.6" stroke="#444" stroke-width="2.3"/></svg><svg style="left:33px;top:6px" width="11" height="9" viewBox="0 0 11 9"><path d="M0 0.9h10.5M0 4.5h10.5M0 8.1h10.5" stroke="#444" stroke-width="1.6"/></svg><svg style="left:57px;top:5px" width="11" height="11" viewBox="0 0 11 11"><path d="M8 0.6l2.4 2.4-7 7-3 .9.9-3z" fill="#444"/><path d="M1.4 8.2l1.4 1.4" stroke="#f5f5f5" stroke-width="0.9"/><path d="M6.8 1.8l2.4 2.4" stroke="#f5f5f5" stroke-width="0.7"/></svg><svg style="left:78px;top:6px" width="12" height="10" viewBox="0 0 12 10"><path d="M0 3.3h6.5V0L12 4.5 6.5 9V5.7H0z" fill="#444"/></svg><svg style="left:102px;top:6px" width="9" height="9" viewBox="0 0 9 9"><path d="M1 1l7 7M8 1L1 8" stroke="#444" stroke-width="2.4"/></svg></span></td></tr>
<tr><td><span class="cb"></span></td><td>812</td><td>800</td><td>ceshi01</td><td>jb460942</td><td><a class="l">11</a></td><td><a class="l">普通成员</a></td><td>0</td><td>36.17.171.220</td><td><span class="bd">正常返佣</span></td><td><span class="bd" style="width:61px">正常账号</span></td><td><span class="bd">正常登录</span></td><td>2021-12-22 23:38</td><td><span class="ops"><i style="left:24px"></i><i style="left:52px"></i><i style="left:72px"></i><i style="left:95px"></i><svg style="left:7px;top:5px" width="10" height="10" viewBox="0 0 10 10"><path d="M5 0.3v9.6M0.2 5h9.6" stroke="#444" stroke-width="2.3"/></svg><svg style="left:33px;top:6px" width="11" height="9" viewBox="0 0 11 9"><path d="M0 0.9h10.5M0 4.5h10.5M0 8.1h10.5" stroke="#444" stroke-width="1.6"/></svg><svg style="left:57px;top:5px" width="11" height="11" viewBox="0 0 11 11"><path d="M8 0.6l2.4 2.4-7 7-3 .9.9-3z" fill="#444"/><path d="M1.4 8.2l1.4 1.4" stroke="#f5f5f5" stroke-width="0.9"/><path d="M6.8 1.8l2.4 2.4" stroke="#f5f5f5" stroke-width="0.7"/></svg><svg style="left:78px;top:6px" width="12" height="10" viewBox="0 0 12 10"><path d="M0 3.3h6.5V0L12 4.5 6.5 9V5.7H0z" fill="#444"/></svg><svg style="left:102px;top:6px" width="9" height="9" viewBox="0 0 9 9"><path d="M1 1l7 7M8 1L1 8" stroke="#444" stroke-width="2.4"/></svg></span></td></tr>
</tbody></table>
<div id="sb"><div id="sbt"></div></div>
<svg style="left:1907px;top:5px" width="9" height="5" viewBox="0 0 9 5" ><path d="M0 5L4.5 0 9 5z" fill="#a3a3a3"/></svg>
</body></html>
